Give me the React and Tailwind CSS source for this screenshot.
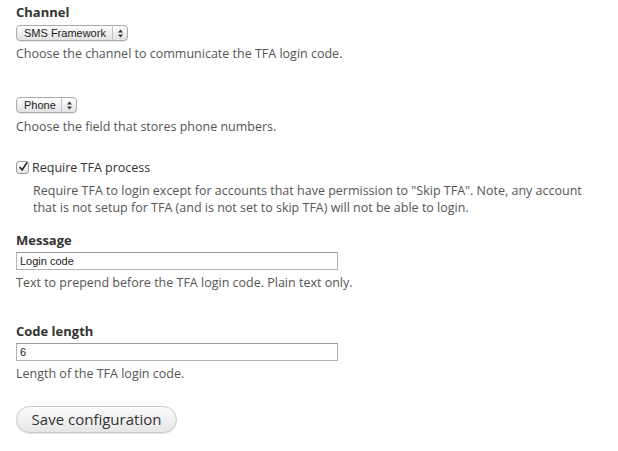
import React from "react";

function SelectBox({ label, width }) {
  return (
    <div
      className={`flex items-center h-[16px] ${width} rounded-[4px] border border-[#a9a9a9] bg-gradient-to-b from-[#fdfdfd] to-[#e3e3e3] shadow-[0_1px_0_rgba(0,0,0,0.08)]`}
    >
      <span className="flex-1 pl-[7px] text-[11px] leading-none text-[#222] font-['Liberation_Sans',Arial,sans-serif]">
        {label}
      </span>
      <span className="flex items-center justify-center w-[15px] h-full border-l border-[#c4c4c4]">
        <svg width="7" height="9" viewBox="0 0 7 9">
          <path d="M3.5 0.5 L6 3.5 H1 Z" fill="#333" />
          <path d="M3.5 8.5 L6 5.5 H1 Z" fill="#333" />
        </svg>
      </span>
    </div>
  );
}

function TextInput({ value }) {
  return (
    <div className="w-[322px] h-[18px] border border-[#b3b3b3] border-t-[#999] bg-white flex items-center pl-[3px] text-[11px] text-[#222] font-['Liberation_Sans',Arial,sans-serif]">
      {value}
    </div>
  );
}

export default function App() {
  return (
    <div className="w-[618px] h-[451px] bg-white px-[16px] pt-[4px] font-['Open_Sans',sans-serif] text-[12.5px] text-[#444]">
      <div className="font-bold text-[#333] leading-[17px] text-[13px]">Channel</div>
      <div className="mt-[4px]">
        <SelectBox label="SMS Framework" width="w-[112px]" />
      </div>
      <p className="mt-[4px] leading-[17px] text-[#555]">
        Choose the channel to communicate the TFA login code.
      </p>

      <div className="mt-[35px]">
        <SelectBox label="Phone" width="w-[61px]" />
      </div>
      <p className="mt-[5px] leading-[17px] text-[#555]">
        Choose the field that stores phone numbers.
      </p>

      <label className="mt-[24px] flex items-center gap-[3px] leading-[17px] text-[#333]">
        <span className="w-[13px] h-[13px] rounded-[3px] border border-[#9a9a9a] bg-gradient-to-b from-white to-[#e6e6e6] flex items-center justify-center">
          <svg width="12" height="12" viewBox="0 0 12 12" className="-mt-[2px] ml-[1px]">
            <path d="M2.5 6.5 L5 9.5 L10.5 1" stroke="#222" strokeWidth="2" fill="none" strokeLinecap="round" strokeLinejoin="round" />
          </svg>
        </span>
        Require TFA process
      </label>
      <p className="mt-[6px] ml-[17px] leading-[17px] text-[#555] w-[575px]">
        Require TFA to login except for accounts that have permission to "Skip TFA". Note, any account
        that is not setup for TFA (and is not set to skip TFA) will not be able to login.
      </p>

      <div className="mt-[16px] font-bold text-[#333] leading-[17px] text-[13px]">Message</div>
      <div className="mt-[3px]">
        <TextInput value="Login code" />
      </div>
      <p className="mt-[4px] leading-[17px] text-[#555]">
        Text to prepend before the TFA login code. Plain text only.
      </p>

      <div className="mt-[32px] font-bold text-[#333] leading-[17px] text-[13px]">Code length</div>
      <div className="mt-[3px]">
        <TextInput value="6" />
      </div>
      <p className="mt-[4px] leading-[17px] text-[#555]">Length of the TFA login code.</p>

      <button className="mt-[24px] w-[161px] h-[27px] rounded-full border border-[#c8c8c8] bg-gradient-to-b from-[#fbfbfb] to-[#e6e6e6] text-[15px] text-[#333] shadow-[0_1px_1px_rgba(0,0,0,0.1)]">
        Save configuration
      </button>
    </div>
  );
}
